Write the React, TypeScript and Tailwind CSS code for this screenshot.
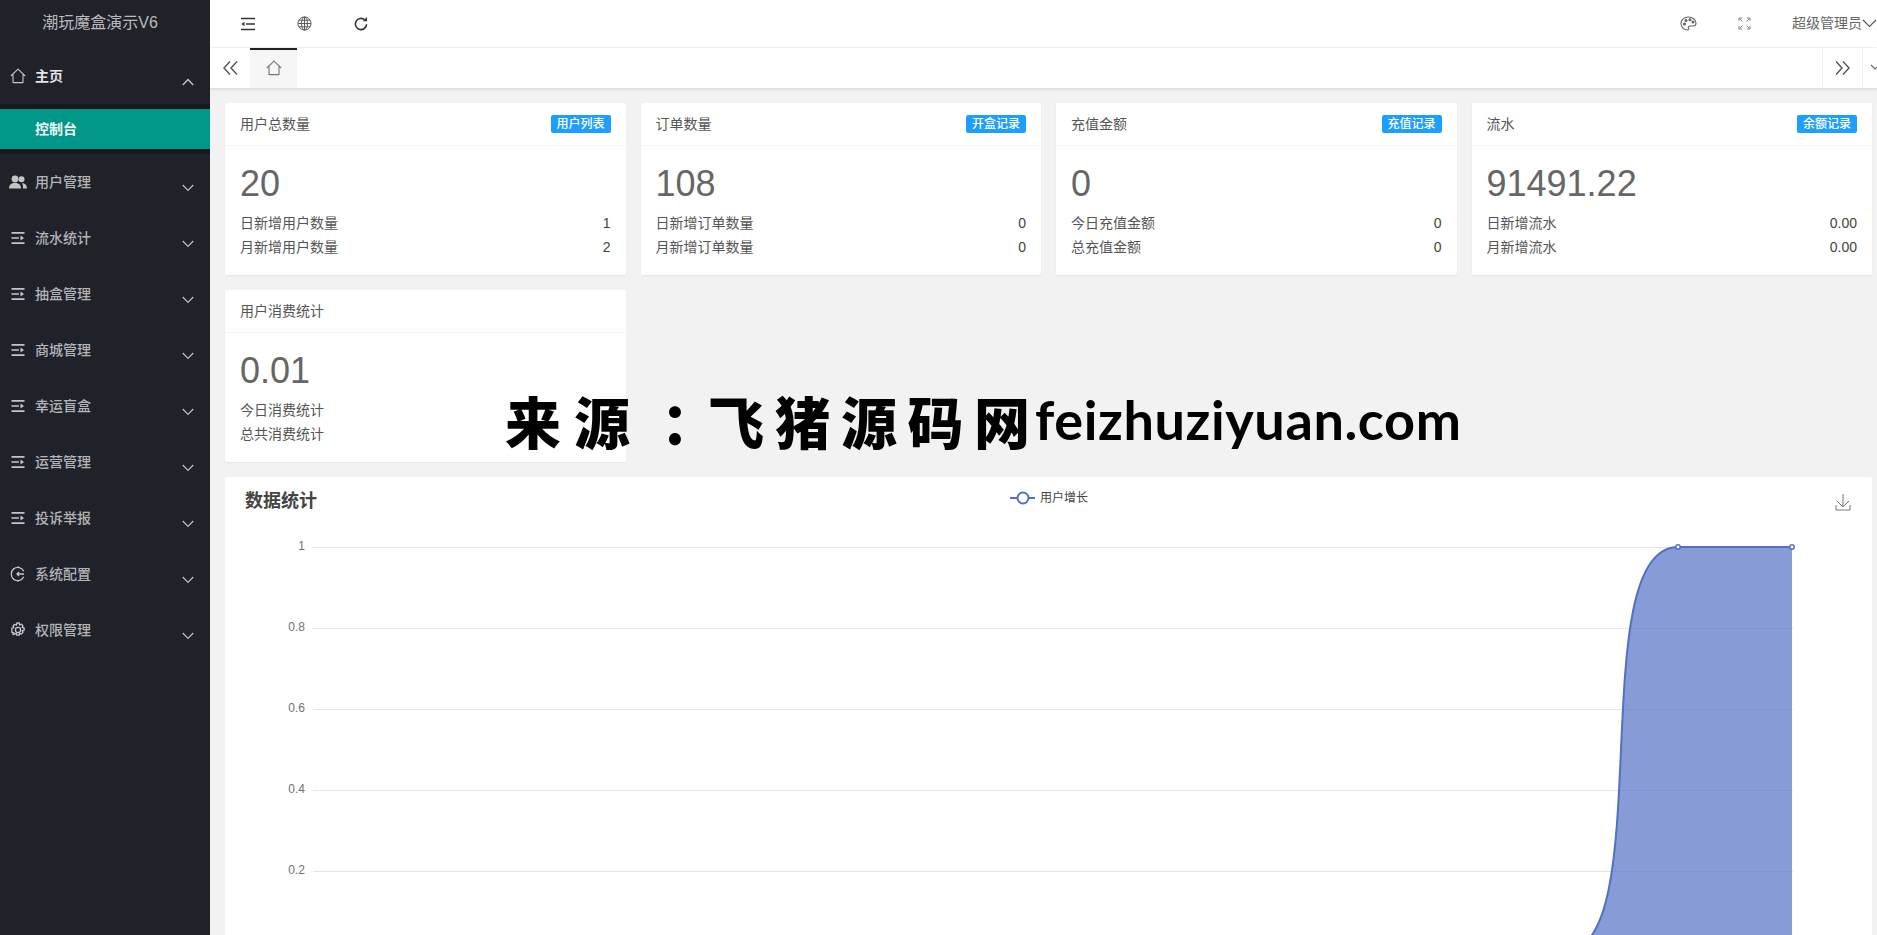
import React from "react";

const FONT = "font-['Liberation_Sans','Noto_Sans_CJK_SC',sans-serif]";

function I({ children, className = "", size = 16, sw = 1.3 }: { children: React.ReactNode; className?: string; size?: number; sw?: number }) {
  return (
    <svg width={size} height={size} viewBox="0 0 16 16" fill="none" stroke="currentColor" strokeWidth={sw} className={className}>
      {children}
    </svg>
  );
}

const HomeIcon = ({ size = 16 }: { size?: number }) => (
  <I size={size} sw={1.1}>
    <path d="M0.8 8 8 1.2 15.2 8M3 6.4V14.6H13V6.4" strokeLinejoin="round" />
  </I>
);
const ListIcon = () => (
  <I>
    <path d="M1.5 2.8H14.5M1.5 13.2H14.5M1.5 8H9" strokeWidth="1.7" />
    <path d="M10.5 5.6 14 8 10.5 10.4Z" fill="currentColor" stroke="none" />
  </I>
);
const UsersIcon = () => (
  <svg width="18" height="14" viewBox="0 0 18 14" fill="currentColor" className="shrink-0">
    <circle cx="6" cy="4" r="3.4" />
    <path d="M0 13.5c0-3.8 2.5-5.5 6-5.5s6 1.7 6 5.5z" />
    <circle cx="12.5" cy="4.2" r="3" />
    <path d="M13 13.5h5c0-3.2-1.8-5.3-5-5.3 0 0 1.5 2 1 5.3z" />
  </svg>
);
const GearHalf = () => (
  <I>
    <path d="M13.8 5.2A6.6 6.6 0 1 0 13.8 10.8M14 8H7M9 6 7 8 9 10" />
    <path d="M8 .6V2M8 14V15.4M2.8 2.8l1 1M2.8 13.2l1-1" />
  </I>
);
const GearIcon = () => (
  <I>
    <circle cx="8" cy="8" r="2.6" />
    <path d="M6.8 1h2.4l.4 2 1.7-.9 1.7 1.7-.9 1.7 2 .4v2.4l-2 .4.9 1.7-1.7 1.7-1.7-.9-.4 2H6.8l-.4-2-1.7.9L3 12.6l.9-1.7-2-.4V6.1l2-.4L3 4l1.7-1.7 1.7.9z" strokeLinejoin="round" />
  </I>
);
const Chevron = ({ up }: { up?: boolean }) => (
  <svg width="12" height="8" viewBox="0 0 12 8" fill="none" stroke="currentColor" strokeWidth={up ? 1.5 : 1.2} className="mt-[12px] text-[#c2c2c4]">
    <path d={up ? "M.8 7 6 1.5 11.2 7" : "M.8 1 6 6.5 11.2 1"} />
  </svg>
);

function MenuItem({ label, icon, up, bright }: { label: string; icon: React.ReactNode; up?: boolean; bright?: boolean }) {
  return (
    <div className={`flex h-[56px] items-center pl-[9px] pr-[16px] text-[14px] ${bright ? "text-[#e4e4e6] font-bold" : "text-[#b3b4b6] font-medium"}`}>
      <span className="flex w-[17px] justify-center text-[#c4c5c7]">{icon}</span>
      <span className="ml-[9px] flex-1">{label}</span>
      <Chevron up={up} />
    </div>
  );
}

function Sidebar() {
  const items: [string, React.ReactNode][] = [
    ["用户管理", <UsersIcon key="u" />],
    ["流水统计", <ListIcon key="a" />],
    ["抽盒管理", <ListIcon key="b" />],
    ["商城管理", <ListIcon key="c" />],
    ["幸运盲盒", <ListIcon key="d" />],
    ["运营管理", <ListIcon key="e" />],
    ["投诉举报", <ListIcon key="f" />],
    ["系统配置", <GearHalf key="g" />],
    ["权限管理", <GearIcon key="h" />],
  ];
  return (
    <aside className="flex w-[210px] shrink-0 flex-col bg-[#20222a]">
      <div className="flex h-[48px] items-center justify-center pb-[2px] pr-[10px] text-[16px] text-[#b9babc]">潮玩魔盒演示V6</div>
      <MenuItem label="主页" icon={<HomeIcon />} up bright />
      <div className="bg-[#17181d] py-[5px]">
        <div className="flex h-[40px] items-center bg-[#009688] pl-[35px] text-[14px] font-bold text-[#eef8f7]">控制台</div>
      </div>
      {items.map(([l, ic]) => (
        <MenuItem key={l} label={l} icon={ic} />
      ))}
    </aside>
  );
}

const ListIconTop = () => (
  <svg width="16" height="14" viewBox="0 0 16 14" fill="none" stroke="currentColor" strokeWidth="1.5">
    <path d="M1 1.5H15M1 12.5H15M6 7H15" />
    <path d="M4.5 4.8 1.5 7 4.5 9.2Z" fill="currentColor" stroke="none" />
  </svg>
);

function TopBar() {
  return (
    <div className="flex h-[48px] shrink-0 items-center border-b border-[#f6f6f6] bg-white text-[#333]">
      <div className="flex w-[240px] items-center pl-[30px]">
        <span className="flex w-[57px] justify-start">
          <ListIconTop />
        </span>
        <span className="flex w-[56px] justify-start text-[#555]">
          <svg width="15" height="15" viewBox="0 0 16 16" fill="none" stroke="currentColor" strokeWidth="1">
            <circle cx="8" cy="8" r="7" />
            <ellipse cx="8" cy="8" rx="3.2" ry="7" />
            <path d="M8 1V15M1 8H15M2 4.5H14M2 11.5H14" />
          </svg>
        </span>
        <svg width="16" height="16" viewBox="0 0 16 16" fill="none" stroke="currentColor" strokeWidth="1.6">
          <path d="M13.6 8.2A5.6 5.6 0 1 1 11.6 3.7" />
          <path d="M14 1V5.2H9.8Z" fill="currentColor" stroke="none" />
        </svg>
      </div>
      <div className="flex-1" />
      <svg width="17" height="15" viewBox="0 0 17 15" fill="none" stroke="#666" strokeWidth="1.1" className="mr-[41px]">
        <path d="M8.5 1C4 1 1 4 1 7.5S4 14 7.5 14c1.6 0 1.5-1.2 1-2-.6-1.1.2-2 1.4-2H13c2.2 0 3-1.2 3-2.8C16 3.5 12.5 1 8.5 1Z" />
        <circle cx="4.5" cy="8" r="1" fill="#666" />
        <circle cx="6" cy="4.5" r="1" fill="#666" />
        <circle cx="10" cy="3.8" r="1" fill="#666" />
        <circle cx="13" cy="6" r="1" fill="#666" />
      </svg>
      <svg width="13" height="13" viewBox="0 0 13 13" fill="none" stroke="#888" strokeWidth="1" className="mr-[41px]">
        <path d="M1 4V1H4M9 1H12V4M12 9V12H9M4 12H1V9M1 1 4.5 4.5M12 1 8.5 4.5M12 12 8.5 8.5M1 12 4.5 8.5" />
      </svg>
      <span className="text-[14px] text-[#666]">超级管理员</span>
      <svg width="15" height="9" viewBox="0 0 15 9" fill="none" stroke="#555" strokeWidth="1.1">
        <path d="M1 1 7.5 7.5 14 1" />
      </svg>
    </div>
  );
}

function TabBar() {
  return (
    <div className="relative z-10 flex h-[40px] shrink-0 items-stretch bg-white text-[#555] shadow-[0_1px_3px_rgba(0,0,0,0.14)]">
      <div className="flex w-[40px] items-center justify-center">
        <svg width="15" height="14" viewBox="0 0 15 14" fill="none" stroke="currentColor" strokeWidth="1.4">
          <path d="M7 .5 1 7 7 13.5M14 .5 8 7 14 13.5" />
        </svg>
      </div>
      <div className="flex w-[47px] items-center justify-center border-t-2 border-[#20222a] bg-[#f6f6f6] pb-[2px] text-[#777]">
        <HomeIcon />
      </div>
      <div className="flex-1" />
      <div className="flex w-[40px] items-center justify-center border-l border-[#f0f0f0]">
        <svg width="15" height="14" viewBox="0 0 15 14" fill="none" stroke="currentColor" strokeWidth="1.4">
          <path d="M1 .5 7 7 1 13.5M8 .5 14 7 8 13.5" />
        </svg>
      </div>
      <div className="flex w-[15px] justify-end overflow-hidden border-l border-[#f0f0f0] pt-[16px]">
        <svg width="10" height="6" viewBox="0 0 10 6" fill="none" stroke="#666" strokeWidth="1.1" className="mr-[-3px] shrink-0">
          <path d="M1 1 5 5 9 1" />
        </svg>
      </div>
    </div>
  );
}

type CardData = { title: string; badge?: string; value: string; rows: [string, string?][] };

function Card({ title, badge, value, rows }: CardData) {
  return (
    <div className="h-[172px] rounded-[2px] bg-white shadow-[0_1px_2px_rgba(0,0,0,0.05)]">
      <div className="flex h-[43px] items-center justify-between border-b border-[#f6f6f6] px-[15px] text-[14px] text-[#555]">
        <span>{title}</span>
        {badge && <span className="flex h-[18px] w-[60px] items-center justify-center rounded-[2px] bg-[#1e9fff] text-[12px] font-medium text-white">{badge}</span>}
      </div>
      <div className="px-[15px] pt-[11px]">
        <div className="h-[54px] text-[36px] leading-[54px] text-[#666]">{value}</div>
        <div className="text-[14px] leading-[24px] text-[#555]">
          {rows.map(([a, b]) => (
            <div key={a} className="flex justify-between">
              <span>{a}</span>
              <span className="text-[#444]">{b}</span>
            </div>
          ))}
        </div>
      </div>
    </div>
  );
}

function Chart() {
  // coordinates are those of the card: left 225, top 477
  const ox = 225;
  const oy = 477;
  const X = (x: number) => x - ox;
  const Y = (y: number) => y - oy;
  const grid = [
    ["1", 547],
    ["0.8", 628],
    ["0.6", 709],
    ["0.4", 790],
    ["0.2", 871],
  ] as [string, number][];
  const curve = `M${X(1564)} ${Y(952)}C${X(1660)} ${Y(952)} ${X(1582)} ${Y(547)} ${X(1678)} ${Y(547)}L${X(1792)} ${Y(547)}`;
  return (
    <div className="relative h-[520px] rounded-[2px] bg-white">
      <svg width="1647" height="520" viewBox="0 0 1647 520" className="block">
        <text x="20" y="30" fontSize="18" fontWeight="700" fill="#444">数据统计</text>
        <path d="M785 21H810" stroke="#5470c6" strokeWidth="2" />
        <circle cx="798" cy="21" r="5.5" fill="#fff" stroke="#5470c6" strokeWidth="2" />
        <text x="815" y="25" fontSize="12" fill="#444">用户增长</text>
        {grid.map(([l, y]) => (
          <g key={l}>
            <line x1={X(313)} x2={X(1793)} y1={Y(y) + 0.5} y2={Y(y) + 0.5} stroke="#e0e6f1" />
            <text x={X(305)} y={Y(y) + 3} fontSize="12" fill="#6e7079" textAnchor="end">{l}</text>
          </g>
        ))}
        <path d={`${curve}L${X(1792)} ${Y(952)}Z`} fill="#5470c6" fillOpacity="0.7" />
        <path d={curve} fill="none" stroke="#5470c6" strokeWidth="2" />
        <circle cx={X(1678)} cy={Y(547)} r="2.2" fill="#fff" stroke="#5470c6" strokeWidth="1.5" />
        <circle cx={X(1792)} cy={Y(547)} r="2.2" fill="#fff" stroke="#5470c6" strokeWidth="1.5" />
        <path d="M1618 17V30M1612 24 1618 30 1624 24M1611 28V33H1625V28" fill="none" stroke="#777" strokeWidth="1" />
      </svg>
    </div>
  );
}

export default function App() {
  const cards: CardData[] = [
    { title: "用户总数量", badge: "用户列表", value: "20", rows: [["日新增用户数量", "1"], ["月新增用户数量", "2"]] },
    { title: "订单数量", badge: "开盒记录", value: "108", rows: [["日新增订单数量", "0"], ["月新增订单数量", "0"]] },
    { title: "充值金额", badge: "充值记录", value: "0", rows: [["今日充值金额", "0"], ["总充值金额", "0"]] },
    { title: "流水", badge: "余额记录", value: "91491.22", rows: [["日新增流水", "0.00"], ["月新增流水", "0.00"]] },
    { title: "用户消费统计", value: "0.01", rows: [["今日消费统计"], ["总共消费统计"]] },
  ];
  return (
    <div className={`relative flex h-screen w-full overflow-hidden bg-[#f2f2f2] ${FONT}`}>
      <Sidebar />
      <main className="flex min-w-0 flex-1 flex-col">
        <TopBar />
        <TabBar />
        <div className="min-h-0 flex-1 overflow-hidden pl-[15px] pr-[5px] pt-[15px]">
          <div className="grid grid-cols-4 gap-[15px]">
            {cards.map((c) => (
              <Card key={c.title} {...c} />
            ))}
          </div>
          <div className="mt-[15px]">
            <Chart />
          </div>
        </div>
      </main>
      <div className="pointer-events-none absolute left-[505px] top-[375px] flex items-center whitespace-nowrap font-['Noto_Sans_CJK_SC',sans-serif] text-[56px] font-black leading-[90px] text-black">
        <span className="tracking-[13px]">来源</span>
        <span className="pl-[18px] tracking-[-9px]">：</span>
        <span className="tracking-[10.5px]">飞猪源码</span>
        <span>网</span>
        <span className="ml-[5px] font-['Lato',sans-serif] text-[54px] font-bold tracking-[0.6px]">feizhuziyuan.com</span>
      </div>
    </div>
  );
}
